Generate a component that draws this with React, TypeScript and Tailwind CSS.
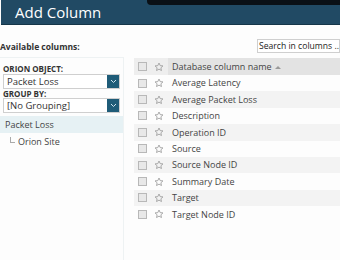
import React from "react";

const rows = [
  "Average Latency",
  "Average Packet Loss",
  "Description",
  "Operation ID",
  "Source",
  "Source Node ID",
  "Summary Date",
  "Target",
  "Target Node ID",
];

function Star() {
  return (
    <svg width="10" height="10" viewBox="0 0 24 24" fill="none" stroke="#9a9a9a" strokeWidth="2" strokeLinejoin="round">
      <path d="M12 2.5l2.9 6.2 6.6.7-5 4.5 1.4 6.6L12 17.1l-5.9 3.4 1.4-6.6-5-4.5 6.6-.7z" />
    </svg>
  );
}

function Check() {
  return <div className="w-[9px] h-[9px] border border-[#b8b8b8] bg-[#e8e8e8]" />;
}

function Select({ label }: { label: string }) {
  return (
    <div className="flex h-[15px] border border-[#cfcfcf] bg-white">
      <div className="flex-1 pl-[3px] text-[9.5px] leading-[13px] text-[#333]">{label}</div>
      <div className="w-[12px] h-[13px] bg-[#1f5c78] flex items-center justify-center">
        <svg width="7" height="5" viewBox="0 0 7 5">
          <path d="M1 1l2.5 2.5L6 1" stroke="#cfe3ec" strokeWidth="1" fill="none" />
        </svg>
      </div>
    </div>
  );
}

export default function App() {
  return (
    <div
      className="w-[340px] h-[260px] bg-[#fdfdfd] overflow-hidden flex flex-col"
      style={{ fontFamily: '"Open Sans", "Noto Sans", sans-serif' }}
    >
      <div className="relative h-[25px] bg-[#214a64] border-b border-[#153649] ml-[1px]">
        <div className="absolute left-[146px] right-0 top-0 h-[5px] bg-[#0a1016] rounded-bl-[4px]" />
        <div className="pl-[14px] pt-[1px] text-[15px] leading-[22px] text-white">Add Column</div>
      </div>
      <div className="flex-1 flex">
        <div className="w-[124px] flex flex-col">
          <div className="pt-[15px] h-[32px] text-[8.5px] font-bold text-[#333] leading-[14px]">Available columns:</div>
          <div className="flex-1 border-r border-t border-[#eef2f3] flex flex-col">
            <div className="px-[3px] pt-[6px]">
              <div className="text-[8px] font-bold text-[#333] leading-[10px]">ORION OBJECT:</div>
              <Select label="Packet Loss" />
              <div className="text-[8px] font-bold text-[#333] leading-[9px]">GROUP BY:</div>
              <Select label="[No Grouping]" />
            </div>
            <div className="mt-[3px] h-[17px] bg-[#e6f1f4] pl-[5px] text-[9px] leading-[17px] text-[#444]">Packet Loss</div>
            <div className="flex items-center h-[17px] pl-[10px] text-[9px] text-[#444]">
              <div className="w-[5px] h-[6px] border-l border-b border-[#aaa] mr-[3px] -mt-[4px]" />
              <span>Orion Site</span>
            </div>
          </div>
        </div>
        <div className="flex-1 flex flex-col pl-[10px]">
          <div className="h-[33px] flex justify-end items-start pt-[14px]">
            <div className="w-[83px] h-[14px] border border-[#cfcfcf] bg-white pl-[1px] text-[8.6px] leading-[12px] text-[#222] overflow-hidden whitespace-nowrap">
              Search in columns ...
            </div>
          </div>
          <div className="flex h-[17px] items-center bg-[#eeeeee]">
            <div className="w-[16px] flex justify-center"><Check /></div>
            <div className="w-[18px] flex justify-center"><Star /></div>
            <div className="flex-1 h-full bg-[#e3e3e3] pl-[4px] text-[9px] leading-[17px] text-[#444] flex items-center">
              Database column name
              <svg width="6" height="4" viewBox="0 0 6 4" className="ml-[3px]">
                <path d="M0 4L3 1L6 4z" fill="#999" />
              </svg>
            </div>
          </div>
          {rows.map((r, i) => (
            <div key={r} className={`flex h-[16.4px] items-center ${i % 2 === 1 ? "bg-[#f3f3f3]" : ""}`}>
              <div className="w-[16px] flex justify-center"><Check /></div>
              <div className="w-[18px] flex justify-center"><Star /></div>
              <div className="flex-1 pl-[4px] text-[9px] text-[#444]">{r}</div>
            </div>
          ))}
        </div>
      </div>
    </div>
  );
}
